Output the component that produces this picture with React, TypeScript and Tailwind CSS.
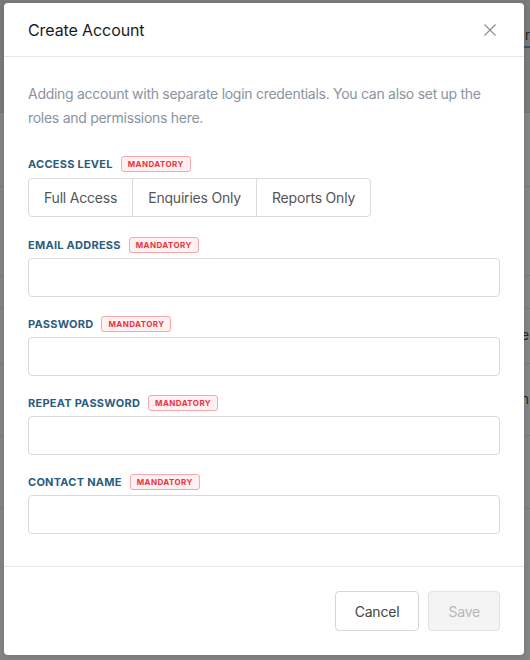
import React from 'react';

const fields = ['Email Address', 'Password', 'Repeat Password', 'Contact Name'];
const levels = ['Full Access', 'Enquiries Only', 'Reports Only'];

function Mandatory() {
  return (
    <span className="inline-flex h-4 items-center rounded-[3px] border border-[#f7a8aa] bg-[#fff1f1] px-[6px] text-[8px] font-bold tracking-[0.4px] text-[#ea3440]">
      MANDATORY
    </span>
  );
}

function FieldLabel({ children }: { children: React.ReactNode }) {
  return (
    <div className="flex h-4 items-center gap-2">
      <span className="text-[11px] font-bold uppercase tracking-[0.25px] text-[#2b5d7e]">{children}</span>
      <Mandatory />
    </div>
  );
}

// page that sits behind the dimmed overlay
function BackgroundPage() {
  const rows = [
    { h: 'h-[74px]', text: '' },
    { h: 'h-[89px]', text: '' },
    { h: 'h-[33px]', text: '' },
    { h: 'h-[55px]', text: 'e' },
    { h: 'h-[72px]', text: 'n' },
    { h: 'h-[73px]', text: '' },
    { h: 'h-[153px]', text: '' },
  ];
  return (
    <div className="flex min-h-[660px] w-[530px] flex-col bg-[#878787]">
      <div className="flex h-[113px] flex-col items-end justify-start border-b border-[#777] bg-[#7c7c7c] pt-[26px]">
        <span className="w-[20px] border-b-2 border-[#2d5670] pb-[2px] text-right text-[13px] leading-[18px] text-[#222]">r</span>
      </div>
      {rows.map((r, i) => (
        <div key={i} className={`${r.h} flex items-center justify-end border-b border-[#7a7a7a]`}>
          {r.text && <span className="mr-px text-[13px] text-[#222]">{r.text}</span>}
        </div>
      ))}
    </div>
  );
}

export default function App() {
  return (
    <div className="relative h-[660px] w-[530px] overflow-hidden font-['Inter',sans-serif]">
      <BackgroundPage />

      {/* Modal */}
      <div className="absolute left-[4px] top-[3px] flex h-[652px] w-[520px] flex-col rounded-[4px] bg-white shadow-[0_2px_8px_rgba(0,0,0,0.15)]">
        {/* Header */}
        <div className="flex h-[54px] shrink-0 items-center justify-between border-b border-[#e6e6e6] pl-6 pr-[28px]">
          <h2 className="text-[16px] font-normal tracking-[-0.1px] text-[#1b1b1b]">Create Account</h2>
          <button aria-label="Close" className="text-[#8c8c8c]">
            <svg width="12" height="12" viewBox="0 0 12 12" fill="none" stroke="currentColor" strokeWidth={1.1}>
              <path d="M0.5 0.5l11 11M11.5 0.5l-11 11" />
            </svg>
          </button>
        </div>

        {/* Body */}
        <div className="flex flex-1 flex-col border-b border-[#e6e6e6] px-6 pt-[25px]">
          <p className="text-[14px] leading-[24px] tracking-[-0.28px] text-[#8a94a0]">
            Adding account with separate login credentials. You can also set up the roles and permissions here.
          </p>

          <div className="mt-[26px]">
            <FieldLabel>Access Level</FieldLabel>
            <div className="mt-[6px] flex h-[39px] w-fit rounded-[4px] border border-[#dadada]">
              {levels.map((l, i) => (
                <button
                  key={l}
                  className={`px-[15px] text-[14px] tracking-[-0.2px] text-[#555] ${i > 0 ? 'border-l border-[#dadada]' : ''}`}
                >
                  {l}
                </button>
              ))}
            </div>
          </div>

          {fields.map((f, i) => (
            <div key={f} className={i === 0 ? 'mt-[20px]' : 'mt-[19px]'}>
              <FieldLabel>{f}</FieldLabel>
              <input
                type={f.includes('Password') ? 'password' : 'text'}
                className="mt-[5px] block h-[39px] w-full rounded-[4px] border border-[#dadada] px-3 text-[14px] outline-none"
              />
            </div>
          ))}
        </div>

        {/* Footer */}
        <div className="flex shrink-0 justify-end gap-[9px] px-6 pb-6 pt-6">
          <button className="h-[40px] rounded-[4px] border border-[#d6d6d6] bg-white px-[19px] text-[14px] tracking-[-0.2px] text-[#444]">
            Cancel
          </button>
          <button disabled className="h-[40px] rounded-[4px] border border-[#e2e2e2] bg-[#f4f4f4] px-[19px] text-[14px] tracking-[-0.2px] text-[#b8b8b8]">
            Save
          </button>
        </div>
      </div>
    </div>
  );
}
